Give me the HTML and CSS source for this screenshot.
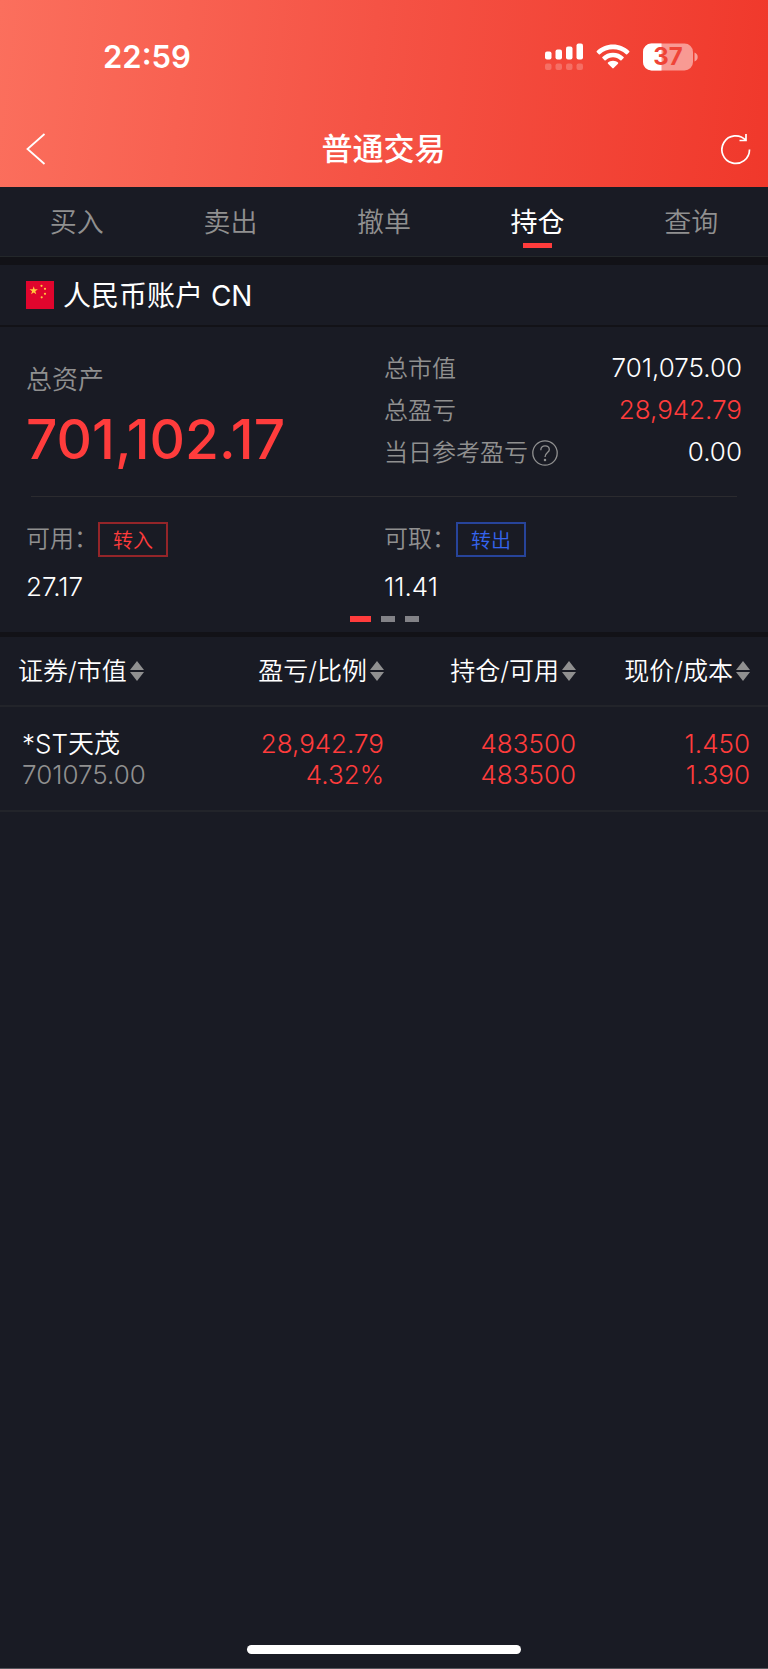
FILE: index.html
```html
<!DOCTYPE html>
<html lang="zh-CN">

<head>
    <meta charset="UTF-8">
    <meta name="viewport" content="width=device-width, initial-scale=1.0">
    <title>普通交易</title>
    <link rel="stylesheet" href="styles.css">
</head>

<body>

    <header>
        <div class="status">
            <span class="time">22:59</span>
            <div class="status-icons">
                <!-- signal -->
                <svg width="38" height="28" viewBox="0 0 38 28" fill="#fff">
                    <rect x="0" y="8.5" width="6.5" height="8" rx="2"/>
                    <rect x="10.5" y="6.5" width="6.5" height="10" rx="2"/>
                    <rect x="21" y="3.5" width="6.5" height="13" rx="2"/>
                    <rect x="31.5" y="0.5" width="6.5" height="16" rx="2"/>
                    <g opacity=".22">
                        <rect x="0" y="20.5" width="6.5" height="6.5" rx="2"/>
                        <rect x="10.5" y="20.5" width="6.5" height="6.5" rx="2"/>
                        <rect x="21" y="20.5" width="6.5" height="6.5" rx="2"/>
                        <rect x="31.5" y="20.5" width="6.5" height="6.5" rx="2"/>
                    </g>
                </svg>
                <!-- wifi -->
                <svg width="34" height="28" viewBox="0 0 34 28" fill="#fff">
                    <path d="M17 1.5C23.300 1.500 29 4 33.200 8Q33.800 8.600 33.200 9.200L31.200 11.200Q30.600 11.800 30 11.200C26.500 8 22 6.200 17 6.200S7.500 8 4 11.200Q3.400 11.800 2.800 11.200L0.800 9.200Q0.200 8.600 0.800 8C5 4 10.700 1.500 17 1.500Z"/>
                    <path d="M17 9.700C21.100 9.700 24.800 11.300 27.600 13.900Q28.200 14.500 27.600 15.100L25.500 17.200Q24.900 17.800 24.300 17.200C22.300 15.400 19.800 14.300 17 14.300S11.700 15.400 9.700 17.200Q9.100 17.800 8.500 17.200L6.400 15.100Q5.800 14.500 6.400 13.900C9.200 11.300 12.900 9.700 17 9.700Z"/>
                    <path d="M17 17.700C19 17.700 20.700 18.400 22 19.500Q22.600 20.100 22 20.700L17.700 25.100Q17 25.700 16.300 25.100L12 20.700Q11.400 20.100 12 19.500C13.300 18.400 15 17.700 17 17.700Z"/>
                </svg>
                <!-- battery -->
                <svg width="55" height="28" viewBox="0 0 55 28">
                    <clipPath id="battery"><rect x="0" y="0.500" width="50" height="27" rx="8.500"/></clipPath>
                    <g clip-path="url(#battery)" fill="#fff">
                        <rect width="50" height="28" opacity=".48"/>
                        <rect width="18.500" height="28"/>
                    </g>
                    <path d="M51.500 9.500C53.500 10 54.700 12 54.700 14S53.500 18 51.500 18.500Z" fill="#fff" opacity=".5"/>
                    <text class="percent" x="25" y="22" text-anchor="middle">37</text>
                </svg>
            </div>
        </div>
        <div class="title-bar">
            <button aria-label="返回">
                <svg width="20" height="32" viewBox="0 0 20 32" fill="none" stroke="#fff" stroke-width="1.800">
                    <path d="M18.500 1L1.500 16L18.500 31"/>
                </svg>
            </button>
            <h1>普通交易</h1>
            <button aria-label="刷新">
                <svg width="30" height="32" viewBox="0 0 30 32" fill="none" stroke="#fff" stroke-width="1.700">
                    <path d="M28.500 16.500A13.800 13.800 0 1 1 24.800 7.200M25 1V7.500H18.500"/>
                </svg>
            </button>
        </div>
    </header>

    <nav>
        <a href="#">买入</a>
        <a href="#">卖出</a>
        <a href="#">撤单</a>
        <a href="#" class="active">持仓</a>
        <a href="#">查询</a>
    </nav>

    <section class="account">
        <svg width="28" height="28" viewBox="0 0 28 28">
            <rect width="28" height="28" fill="#e0052d"/>
            <g fill="#ffc83d">
                <path d="M7.700 5.300L8.700 8.300H11.900L9.300 10.200L10.300 13.200L7.700 11.400L5.100 13.200L6.100 10.200L3.500 8.300H6.700Z"/>
                <circle cx="15.500" cy="4.800" r="1.100"/>
                <circle cx="19" cy="7.800" r="1.100"/>
                <circle cx="19" cy="12.800" r="1.100"/>
                <circle cx="15.700" cy="16.300" r="1.100"/>
            </g>
        </svg>
        <h2>人民币账户 CN</h2>
    </section>

    <section class="assets">
        <div class="row">
            <div class="total">
                <p class="label">总资产</p>
                <p class="sum">701,102.17</p>
            </div>
            <dl>
                <div>
                    <dt>总市值</dt>
                    <dd>701,075.00</dd>
                </div>
                <div>
                    <dt>总盈亏</dt>
                    <dd class="up">28,942.79</dd>
                </div>
                <div>
                    <dt>当日参考盈亏
                        <button aria-label="说明">
                            <svg width="26" height="26" viewBox="0 0 26 26" fill="none" stroke="#909090" stroke-width="1.300">
                                <circle cx="13" cy="13" r="12.200"/>
                                <path d="M8.800 10.200C8.800 7.500 10.500 5.800 13.100 5.800S17.300 7.500 17.300 9.700C17.300 12.600 13 12.800 13 17"/>
                                <circle cx="13" cy="20" r="0.600" fill="#909090"/>
                            </svg>
                        </button>
                    </dt>
                    <dd>0.00</dd>
                </div>
            </dl>
        </div>
        <hr>
        <div class="row">
            <div class="cash">
                <p>可用：<button class="transfer in">转入</button></p>
                <p class="num">27.17</p>
            </div>
            <div class="cash">
                <p>可取：<button class="transfer out">转出</button></p>
                <p class="num">11.41</p>
            </div>
        </div>
        <div class="pager">
            <span class="on"></span>
            <span></span>
            <span></span>
        </div>
    </section>

    <table>
        <thead>
            <tr>
                <th><button>证券/市值<svg width="14" height="20" viewBox="0 0 14 20"><path d="M7 0L14 9H0ZM0 11H14L7 20Z"/></svg></button></th>
                <th><button>盈亏/比例<svg width="14" height="20" viewBox="0 0 14 20"><path d="M7 0L14 9H0ZM0 11H14L7 20Z"/></svg></button></th>
                <th><button>持仓/可用<svg width="14" height="20" viewBox="0 0 14 20"><path d="M7 0L14 9H0ZM0 11H14L7 20Z"/></svg></button></th>
                <th><button>现价/成本<svg width="14" height="20" viewBox="0 0 14 20"><path d="M7 0L14 9H0ZM0 11H14L7 20Z"/></svg></button></th>
            </tr>
        </thead>
        <tbody>
            <tr>
                <td><span class="name">*ST天茂</span><br><span class="value">701075.00</span></td>
                <td>28,942.79<br>4.32%</td>
                <td>483500<br>483500</td>
                <td>1.450<br>1.390</td>
            </tr>
        </tbody>
    </table>

    <div class="home-bar"></div>

</body>

</html>
```

FILE: styles.css
```css
* {
    box-sizing: border-box;
    margin: 0;
    padding: 0;
}

body {
    display: flex;
    flex-direction: column;
    min-height: 100vh;
    background-color: #191b24;
    border-bottom: 1px solid #55565c;
    color: #fff;
    font-family: Inter, "Noto Sans CJK SC", sans-serif;
    font-size: 26px;
    line-height: 1.2;
}

button {
    background: none;
    border: none;
    color: inherit;
    font: inherit;
    cursor: pointer;
}

svg {
    display: block;
    flex-shrink: 0;
}

a {
    color: inherit;
    text-decoration: none;
}

header {
    background: linear-gradient(96deg, #fb6f5d 0%, #f55345 48%, #f0382b 100%);
}

.status {
    display: flex;
    justify-content: space-between;
    align-items: center;
    height: 110px;
    padding: 4px 70px 0 103px;
}

.time {
    font-size: 31px;
    font-weight: 600;
}

.status-icons {
    display: flex;
    gap: 13px;
}

.percent {
    fill: #ef4437;
    font-size: 24px;
    font-weight: 700;
}

.title-bar {
    display: flex;
    justify-content: space-between;
    align-items: center;
    height: 77px;
    padding: 0 17px 0 26px;
}

h1 {
    font-size: 31px;
    font-weight: 500;
}

nav {
    display: flex;
    height: 70px;
    border-bottom: 1px solid #23272a;
}

nav a {
    flex: 1;
    display: flex;
    flex-direction: column;
    align-items: center;
    padding-top: 16px;
    color: #909090;
    font-size: 27px;
    font-weight: 350;
    line-height: 40px;
}

nav .active {
    color: #fff;
    font-weight: 400;
}

nav .active::after {
    content: '';
    width: 29px;
    height: 5px;
    background-color: #ff3c3c;
}

.account {
    display: flex;
    align-items: center;
    gap: 9px;
    height: 70px;
    padding: 0 26px;
    border-top: 8px solid #121217;
    border-bottom: 2px solid #121217;
}

h2 {
    padding-top: 3px;
    font-size: 28px;
    font-weight: 400;
}

.assets {
    padding: 20px 26px 10px;
    border-bottom: 5px solid #121217;
}

.row {
    display: grid;
    grid-template-columns: 1fr 1fr;
}

.label {
    padding-top: 14px;
    color: #909090;
    font-size: 26px;
    font-weight: 350;
    line-height: 38px;
}

.sum {
    color: #ff3c3c;
    font-size: 55px;
    font-weight: 500;
    line-height: 80px;
}

dl div {
    display: flex;
    justify-content: space-between;
    align-items: center;
    height: 42px;
}

dt {
    display: flex;
    align-items: center;
    gap: 4px;
    padding-top: 3px;
    color: #909090;
    font-size: 24px;
    font-weight: 350;
}

dd {
    font-weight: 350;
}

.up {
    color: #ff3c3c;
}

hr {
    margin: 17px 5px 24px;
    border: none;
    border-top: 1px solid #2b2b2f;
}

.cash {
    color: #909090;
    font-size: 24px;
    font-weight: 350;
}

.cash p {
    display: flex;
    align-items: center;
    height: 36px;
}

.cash .num {
    height: 59px;
    color: #fff;
    font-size: 26px;
}

.transfer {
    width: 70px;
    height: 35px;
    padding-top: 3px;
    border: 2px solid;
    font-size: 20px;
    line-height: 28px;
}

.in {
    border-color: #942529;
    color: #ff3c3c;
}

.out {
    border-color: #27449a;
    color: #3564ee;
}

.pager {
    display: flex;
    justify-content: center;
    gap: 10px;
}

.pager span {
    width: 14px;
    height: 6px;
    background-color: #828287;
}

.pager .on {
    width: 21px;
    background-color: #ff3c3c;
}

table {
    width: 100%;
    table-layout: fixed;
    border-collapse: collapse;
}

tr {
    border-bottom: 2px solid #22242a;
}

th {
    height: 69px;
    font-size: 25px;
    font-weight: 350;
    white-space: nowrap;
}

th button {
    display: flex;
    align-items: center;
    gap: 3px;
    margin-left: auto;
}

th:first-child button {
    margin-left: 0;
}

th svg {
    fill: #909090;
}

td {
    height: 105px;
    color: #ff3c3c;
    font-weight: 300;
    line-height: 31px;
    text-align: right;
}

th:first-child {
    padding-left: 18px;
}

td:first-child {
    padding-left: 22px;
    text-align: left;
}

th:last-child,
td:last-child {
    padding-right: 18px;
}

.name {
    color: #fff;
    font-weight: 350;
}

.value {
    color: #909090;
}

.home-bar {
    width: 274px;
    height: 9px;
    margin: auto auto 14px;
    border-radius: 5px;
    background-color: #fff;
}
```
